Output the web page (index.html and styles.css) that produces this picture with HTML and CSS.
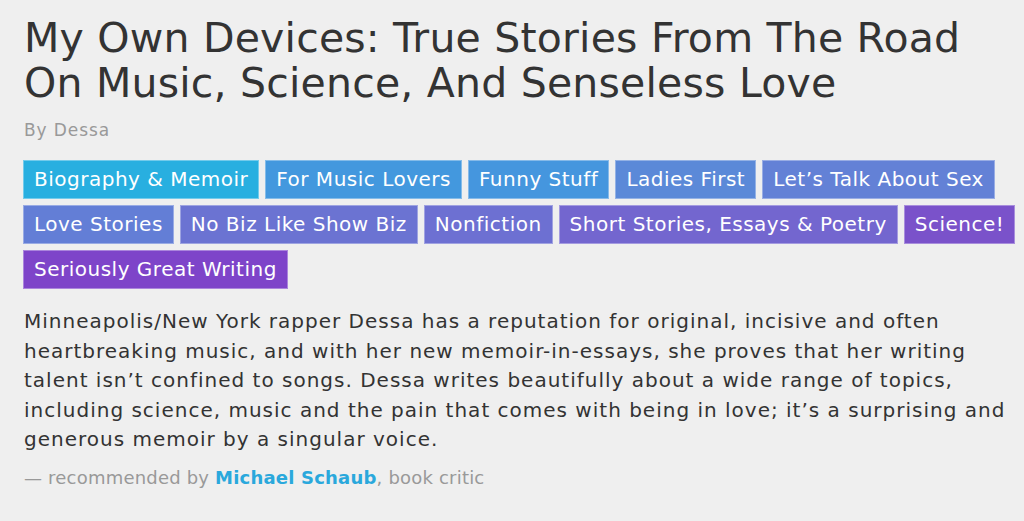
FILE: index.html
```html
<!DOCTYPE html>
<html lang="en">

<head>
  <meta charset="UTF-8">
  <meta name="viewport" content="width=device-width, initial-scale=1.0">
  <title>My Own Devices</title>
  <link rel="stylesheet" href="styles.css">
</head>

<body>

  <div class="book">
    <h1 class="book-title">My Own Devices: True Stories From The Road On Music, Science, And Senseless Love</h1>
    <p class="book-author">By Dessa</p>

    <ul class="tags">
      <li class="tag tag-1">Biography &amp; Memoir</li>
      <li class="tag tag-2">For Music Lovers</li>
      <li class="tag tag-3">Funny Stuff</li>
      <li class="tag tag-4">Ladies First</li>
      <li class="tag tag-5">Let’s Talk About Sex</li>
      <li class="tag tag-6">Love Stories</li>
      <li class="tag tag-7">No Biz Like Show Biz</li>
      <li class="tag tag-8">Nonfiction</li>
      <li class="tag tag-9">Short Stories, Essays &amp; Poetry</li>
      <li class="tag tag-10">Science!</li>
      <li class="tag tag-11">Seriously Great Writing</li>
    </ul>

    <p class="book-text">Minneapolis/New York rapper Dessa has a reputation for original, incisive and often heartbreaking music, and with her new memoir-in-essays, she proves that her writing talent isn’t confined to songs. Dessa writes beautifully about a wide range of topics, including science, music and the pain that comes with being in love; it’s a surprising and generous memoir by a singular voice.</p>

    <p class="book-credit">— recommended by <a href="#">Michael Schaub</a>, book critic</p>
  </div>

</body>

</html>
```

FILE: styles.css
```css
body {
  font-family: "DejaVu Sans", Arial, sans-serif;
  background-color: #efefef;
  color: #333;
  margin: 0;
  padding: 0;
}

.book {
  padding: 16px 12px 0 24px;
}

.book-title {
  font-size: 41px;
  font-weight: normal;
  letter-spacing: 0.2px;
  line-height: 45px;
  margin: 0;
  color: #333;
  max-width: 975px;
}

.book-author {
  font-size: 17px;
  letter-spacing: 0.9px;
  color: #999;
  margin: 14px 0 0 0;
}

.tags {
  list-style: none;
  margin: 20px -12px 0 -1px;
  padding: 0;
  display: flex;
  flex-wrap: wrap;
  gap: 6px 6px;
}

.tag {
  color: white;
  font-size: 20px;
  letter-spacing: 0.5px;
  line-height: 27px;
  padding: 5px 10px;
  border: 1px solid rgba(255, 255, 255, 0.35);
}

.tag-1 { background-color: #28afe0; }
.tag-2 { background-color: #4398de; }
.tag-3 { background-color: #4596de; }
.tag-4 { background-color: #5b89d8; }
.tag-5 { background-color: #6381d6; }
.tag-6 { background-color: #637ed6; }
.tag-7 { background-color: #6b73d2; }
.tag-8 { background-color: #6d70d2; }
.tag-9 { background-color: #7366cf; }
.tag-10 { background-color: #7a52ca; }
.tag-11 { background-color: #7e44c9; }

.book-text {
  font-size: 20px;
  letter-spacing: 1px;
  line-height: 29.5px;
  margin: 18px 0 0 0;
}

.book-credit {
  font-size: 18px;
  letter-spacing: 0.2px;
  color: #999;
  margin: 12px 0 0 0;
}

.book-credit a {
  color: #2aa8dc;
  font-weight: bold;
  text-decoration: none;
}
```
